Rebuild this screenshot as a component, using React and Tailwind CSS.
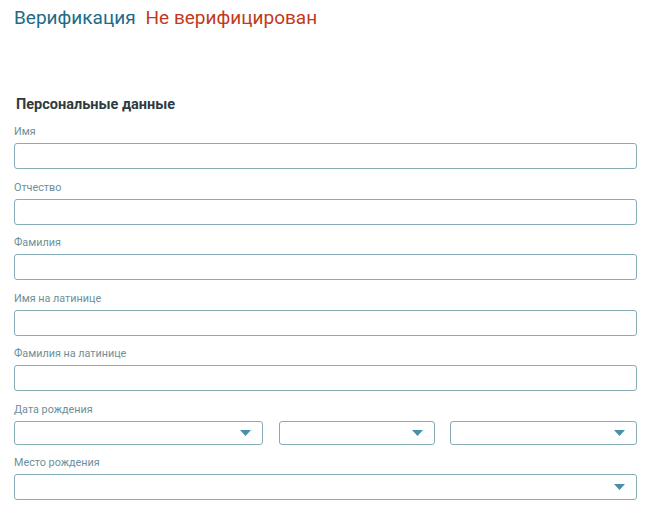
import React from "react";

const Caret = () => (
  <svg width="11" height="6" viewBox="0 0 11 6" className="absolute right-[11px] top-1/2 -translate-y-1/2">
    <path d="M0 0 H11 L5.5 6 Z" fill="#4a8fa8" />
  </svg>
);

const Input = () => (
  <div className="h-[26px] rounded-[3px] border border-[#86adb6] bg-white" />
);

const Select = ({ className = "", h = "h-[25px]" }) => (
  <div className={`relative ${h} rounded-[3px] border border-[#86adb6] bg-white ${className}`}>
    <Caret />
  </div>
);

const Label = ({ children }) => (
  <div className="text-[10.8px] leading-[13px] text-[#6d8f9a] mb-[5px]">{children}</div>
);

export default function App() {
  return (
    <div className="w-[651px] h-[516px] bg-white px-[14px] pt-[6px]" style={{ fontFamily: "Roboto, 'Liberation Sans', sans-serif" }}>
      <div className="flex items-baseline gap-[10px] text-[19px] leading-[24px]">
        <span className="text-[#1d6b88]">Верификация</span>
        <span className="text-[#c23a1c]">Не верифицирован</span>
      </div>
      <div className="mt-[66px] pl-[2px] text-[14.5px] leading-[18px] font-bold text-[#2f3b40]">Персональные данные</div>
      <div className="mt-[11px] flex flex-col gap-[11.5px]">
        <div><Label>Имя</Label><Input /></div>
        <div><Label>Отчество</Label><Input /></div>
        <div><Label>Фамилия</Label><Input /></div>
        <div><Label>Имя на латинице</Label><Input /></div>
        <div><Label>Фамилия на латинице</Label><Input /></div>
        <div>
          <Label>Дата рождения</Label>
          <div className="flex gap-[16px] mt-[1px]">
            <Select className="w-[249px]" h="h-[24px]" />
            <Select className="w-[156px] mr-[-1px]" h="h-[24px]" />
            <Select className="flex-1" h="h-[24px]" />
          </div>
        </div>
        <div><Label>Место рождения</Label><Select h="h-[26px]" /></div>
      </div>
    </div>
  );
}
